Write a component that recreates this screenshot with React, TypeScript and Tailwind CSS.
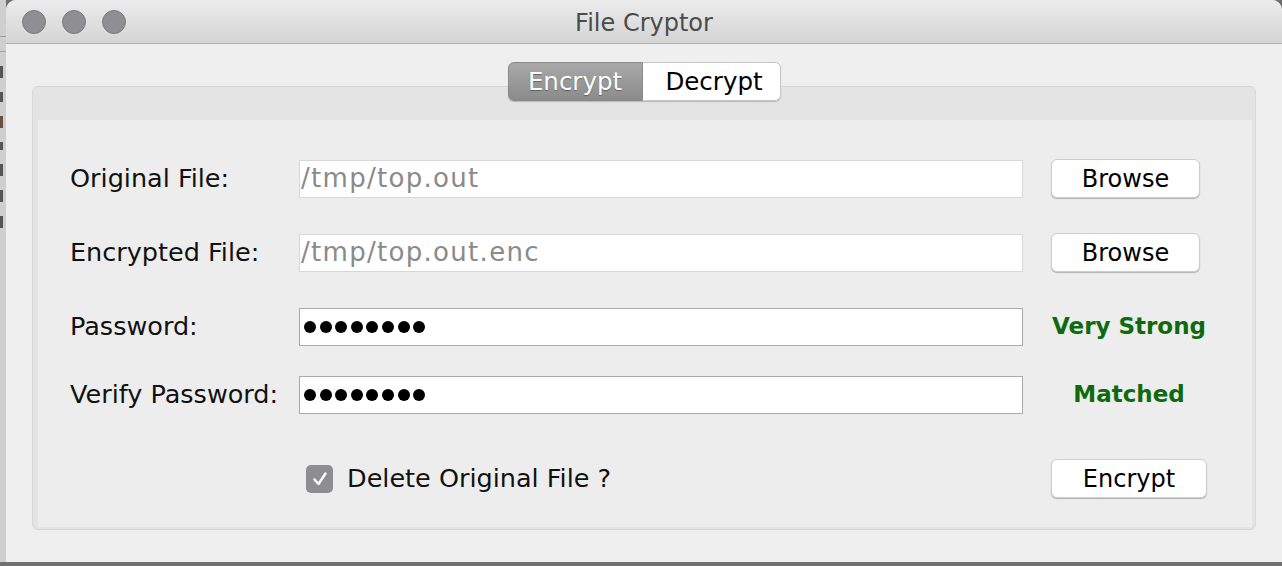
const font = { fontFamily: '"DejaVu Sans", "Liberation Sans", sans-serif' };

function Dots() {
  return (
    <div className="flex items-center gap-[3.6px] pl-[4px]">
      {Array.from({ length: 8 }).map((_, i) => (
        <span key={i} className="block w-[12px] h-[12px] rounded-full bg-black" />
      ))}
    </div>
  );
}

function MacButton({ label, width }: { label: string; width: string }) {
  return (
    <button
      className={`${width} h-[39px] rounded-[6px] bg-white border border-[#cdcdcd] shadow-[0_1px_1px_rgba(0,0,0,0.25)] text-[24px] text-black leading-none`}
    >
      {label}
    </button>
  );
}

function FileRow({ label, value }: { label: string; value: string }) {
  return (
    <div className="flex items-center h-[39px]">
      <div className="w-[229px] text-[25.5px] text-[#111]">{label}</div>
      <div className="flex-1 h-[38px] bg-white border border-[#d7d7d7] flex items-center pl-[1px] text-[26px] tracking-[1.3px] text-[#8a8a8a]">
        {value}
      </div>
      <div className="w-[156px] ml-[28px]">
        <MacButton label="Browse" width="w-[149px]" />
      </div>
    </div>
  );
}

function PasswordRow({ label, status }: { label: string; status: string }) {
  return (
    <div className="flex items-center h-[39px]">
      <div className="w-[229px] text-[25.5px] text-[#111]">{label}</div>
      <div className="flex-1 h-[38px] bg-white border border-[#ababab] flex items-center">
        <Dots />
      </div>
      <div className="w-[156px] ml-[28px] flex justify-center whitespace-nowrap text-[23px] font-bold text-[#0d6b0d]">
        {status}
      </div>
    </div>
  );
}

export default function App() {
  return (
    <div className="w-[1282px] h-[566px] flex flex-col bg-[#6f6f6f] overflow-hidden" style={font}>
      <div className="flex h-[562px]">
        {/* sliver of the window behind */}
        <div className="w-[6px] bg-[#cfcfcf] flex flex-col pt-[36px] gap-[14px]">
          <div className="h-[1px] bg-[#9a9a9a]" />
          <div className="h-[1px] bg-[#a8a8a8]" />
          <div className="h-[12px] w-[3px] bg-[#555]" />
          <div className="h-[10px] w-[3px] bg-[#555]" />
          <div className="h-[12px] w-[3px] bg-[#6a5040]" />
          <div className="h-[8px] w-[3px] bg-[#555]" />
          <div className="h-[12px] w-[3px] bg-[#555]" />
          <div className="h-[12px] w-[3px] bg-[#555]" />
          <div className="h-[12px] w-[3px] bg-[#555]" />
        </div>

        {/* window */}
        <div className="flex-1 flex flex-col rounded-t-[10px] overflow-hidden bg-[#efefef]">
          {/* title bar */}
          <div className="h-[44px] grid grid-cols-[1fr_auto_1fr] items-center bg-gradient-to-b from-[#ececec] to-[#d4d4d4] border-b border-[#b1b1b1]">
            <div className="flex items-center gap-[16px] pl-[16px]">
              <span className="block w-[24px] h-[24px] rounded-full bg-[#8f8e92] border border-[#7b7a7e]" />
              <span className="block w-[24px] h-[24px] rounded-full bg-[#8f8e92] border border-[#7b7a7e]" />
              <span className="block w-[24px] h-[24px] rounded-full bg-[#8f8e92] border border-[#7b7a7e]" />
            </div>
            <div className="text-[24px] text-[#4b4b4b] leading-none pt-[2px]">File Cryptor</div>
            <div />
          </div>

          {/* content */}
          <div className="flex-1 flex flex-col items-center pt-[18px] px-[26px] pb-[32px]">
            <div className="relative z-10 flex h-[39px] rounded-[6px] shadow-[0_1px_1px_rgba(0,0,0,0.2)]">
              <div className="w-[135px] flex items-center justify-center rounded-l-[6px] bg-gradient-to-b from-[#a9a9a9] to-[#8b8b8b] border border-[#8a8a8a] text-[24.5px] text-white pt-[2px] [text-shadow:0_1px_1px_rgba(0,0,0,0.35)]">
                Encrypt
              </div>
              <div className="w-[138px] flex items-center justify-center rounded-r-[6px] bg-white border border-l-0 border-[#c6c6c6] text-[24.5px] text-black pt-[2px] pl-[6px]">
                Decrypt
              </div>
            </div>

            <div className="self-stretch flex-1 -mt-[15px] rounded-[6px] border border-[#d8d8d8] bg-[#e4e4e4] flex flex-col pt-[33px] pl-[5px] pr-[3px] pb-[2px]">
              <div className="flex-1 bg-[#ededed] flex flex-col pt-[39px] pl-[32px] pr-[45px]">
                <FileRow label="Original File:" value="/tmp/top.out" />
                <div className="h-[35px]" />
                <FileRow label="Encrypted File:" value="/tmp/top.out.enc" />
                <div className="h-[35px]" />
                <PasswordRow label="Password:" status="Very Strong" />
                <div className="h-[29px]" />
                <PasswordRow label="Verify Password:" status="Matched" />
                <div className="h-[45px]" />
                <div className="flex items-center h-[39px]">
                  <div className="w-[229px]" />
                  <div className="flex-1 flex items-center gap-[14px] pl-[7px]">
                    <span className="w-[27px] h-[28px] rounded-[5px] bg-[#8e8e92] flex items-center justify-center">
                      <svg width="18" height="18" viewBox="0 0 18 18">
                        <path d="M3.5 9.5 L7.5 14 L14.5 3.5" fill="none" stroke="white" strokeWidth="2.4" strokeLinecap="round" strokeLinejoin="round" />
                      </svg>
                    </span>
                    <span className="text-[25.5px] text-[#111]">Delete Original File ?</span>
                  </div>
                  <div className="w-[156px] ml-[28px]">
                    <MacButton label="Encrypt" width="w-[156px]" />
                  </div>
                </div>
              </div>
            </div>
          </div>
        </div>
      </div>
      <div className="h-[4px] bg-[#6f6f6f]" />
    </div>
  );
}
